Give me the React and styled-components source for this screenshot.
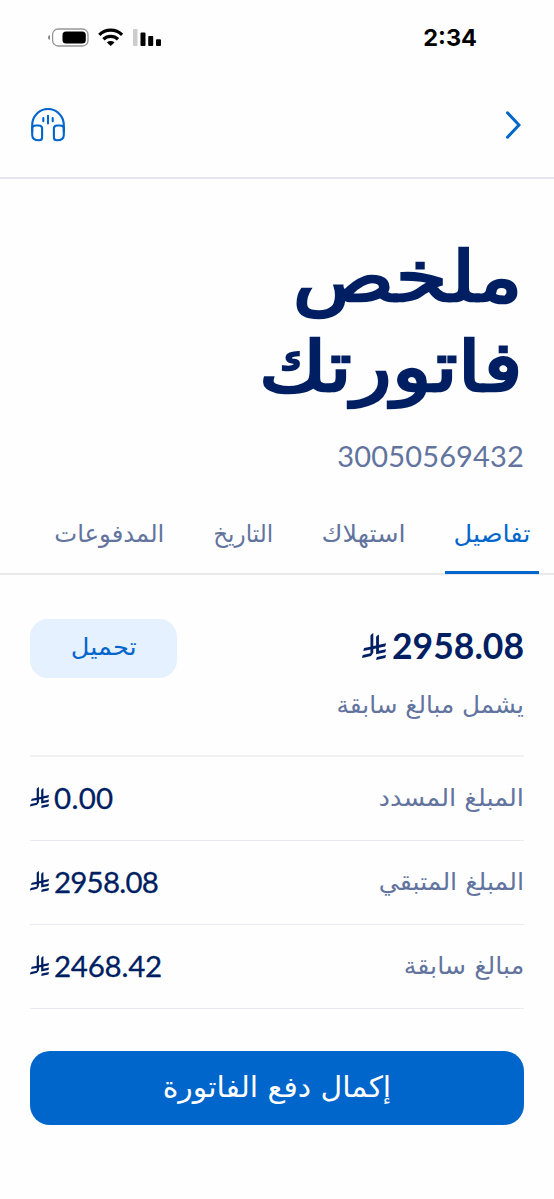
import React from "react";
import styled, { createGlobalStyle } from "styled-components";

const navy = "#001f62";
const blue = "#0066cc";
const slate = "#62749e";

const GlobalStyle = createGlobalStyle`
  * { box-sizing: border-box; }
  body { margin: 0; background: #fefefe; }
  button { border: 0; padding: 0; font: inherit; background: none; }
`;

const Screen = styled.main`
  width: 554px;
  height: 1199px;
  overflow: hidden;
  display: flex;
  flex-direction: column;
  background: #fefefe;
  color: ${navy};
  font-family: Lato, "DejaVu Sans", sans-serif;
`;

const StatusBar = styled.header`
  height: 75px;
  display: flex;
  justify-content: space-between;
  align-items: center;
  padding: 0 77px 0 48px;
`;

const Time = styled.span`
  font: 700 23.5px/28px Inter, sans-serif;
  color: #000;
`;

const NavBar = styled.nav`
  height: 104px;
  display: flex;
  justify-content: space-between;
  align-items: center;
  padding: 0 33px 2px 30px;
  border-bottom: 2px solid #e6e6f0;
`;

const IconButton = styled.button`
  display: flex;
`;

/* Keeps Arabic words joined while adjusting their horizontal proportion. */
const Arabic = styled.span`
  display: block;
  width: max-content;
  white-space: nowrap;
  font-family: "DejaVu Sans", sans-serif;
  font-size: ${(p) => p.$size || 24}px;
  line-height: 30px;
  transform: scaleX(${(p) => p.$stretch || 1});
  transform-origin: ${(p) => p.$origin || "right"};
`;

const TitleLine = styled(Arabic)`
  line-height: 90px;
  -webkit-text-stroke: 2.6px ${navy};
`;

const Hero = styled.section`
  height: 325px;
  padding: 53px 31px 0 30px;
`;

const Title = styled.h1`
  margin: 0;
  font-weight: 400;
`;

const Account = styled.p`
  margin: 24px -1px 0 0;
  font-size: 29px;
  line-height: 40px;
  letter-spacing: 0.15px;
  color: ${slate};
`;

const Tabs = styled.div`
  height: 71px;
  display: flex;
  padding-right: 15px;
  border-bottom: 2px solid #e9e9ec;
`;

const Tab = styled.button`
  width: ${(p) => p.$width}px;
  height: 70px;
  display: flex;
  justify-content: center;
  align-items: flex-start;
  padding-top: 15px;
  color: ${(p) => (p.$active ? blue : slate)};
  border-bottom: ${(p) => (p.$active ? `3px solid ${blue}` : "0")};
`;

const Summary = styled.section`
  height: 182px;
  margin: 0 30px;
  padding-top: 44px;
  display: flex;
  justify-content: space-between;
  align-items: flex-start;
  border-bottom: 2px solid #f0f1f3;
`;

const Total = styled.div`
  display: flex;
  flex-direction: column;
  align-items: flex-start;
  gap: 24px;
  padding-top: 7px;
  color: ${slate};
`;

const Amount = styled.span`
  direction: ltr;
  display: flex;
  align-items: center;
  gap: ${(p) => (p.$large ? 6 : 5)}px;
  color: ${navy};
  font-size: ${(p) => (p.$large ? 35.5 : 29.5)}px;
  line-height: 40px;
  font-weight: ${(p) => (p.$large ? 700 : 400)};
  letter-spacing: ${(p) => p.$spacing || 0}px;
  -webkit-text-stroke: ${(p) => (p.$large ? 0 : 0.3)}px ${navy};
`;

const Download = styled.button`
  width: 147px;
  height: 59px;
  padding-bottom: 3px;
  border-radius: 18px;
  display: flex;
  justify-content: center;
  align-items: center;
  background: #e5f1ff;
  color: ${blue};
`;

const Lines = styled.section`
  margin: 0 30px;
`;

const Line = styled.div`
  height: 84px;
  padding-bottom: 2px;
  display: flex;
  justify-content: space-between;
  align-items: center;
  border-bottom: 1px solid #e8eaef;
  color: ${slate};
`;

const Pay = styled.button`
  height: 74px;
  margin: 42px 30px 0;
  padding-bottom: 3px;
  border-radius: 20px;
  display: flex;
  justify-content: center;
  align-items: center;
  background: ${blue};
  color: #fff;
`;

function StatusIcons() {
  return (
    <svg width="114" height="20" viewBox="0 0 114 20">
      <path d="M2 7v5C.6 11.5 0 10.7 0 9.5s.6-2 2-2.5Z" fill="#888" />
      <rect x="4.6" y="1" width="35.4" height="17" rx="5.5" fill="none" stroke="#969696" strokeWidth="1.3" />
      <rect x="14.5" y="3.4" width="23.3" height="12.2" rx="3.6" />
      <g fill="none" stroke="#000" strokeWidth="3.3">
        <path d="M51.3 6.9a16.2 16.2 0 0 1 22.8 0" />
        <path d="M55.4 11.3a10.5 10.5 0 0 1 14.6 0" />
      </g>
      <path d="M62.7 18 58.9 14.4a5.6 5.6 0 0 1 7.6 0Z" />
      <rect x="85" y="1" width="4.5" height="17" rx="1" fill="#ccc" />
      <rect x="92.5" y="4.4" width="5" height="13.6" rx="1" />
      <rect x="100.2" y="8.1" width="5" height="9.9" rx="1" />
      <rect x="108" y="11.2" width="5" height="6.8" rx="1" />
    </svg>
  );
}

function Headset() {
  return (
    <svg width="36" height="36" viewBox="0 0 36 36" fill="none" stroke={blue} strokeWidth="2.1" strokeLinecap="round">
      <path d="M2.2 24.5V18a15.8 16 0 0 1 31.6 0v6.5" />
      <path d="M2.2 21c0-1.5 1.4-2.4 3.8-2.5h2.8c2.2 0 3.3 1 3.3 3v9c0 2-1 2.8-3 2.8-4.6 0-6.9-1.3-6.9-5.3Z" />
      <path d="M33.8 21c0-1.5-1.4-2.4-3.8-2.5h-2.8c-2.2 0-3.3 1-3.3 3v9c0 2 1 2.8 3 2.8 4.6 0 6.9-1.3 6.9-5.3Z" />
      <path d="M13.3 11v3.2M18 8.7v7.8M22.7 11v3.2" />
    </svg>
  );
}

function Chevron() {
  return (
    <svg width="16" height="28" viewBox="0 0 16 28" fill="none" stroke={blue} strokeWidth="3" strokeLinecap="round">
      <path d="M2.5 1.8 14 14 2.5 26.2" />
    </svg>
  );
}

function Riyal({ width, height }) {
  return (
    <svg width={width} height={height} viewBox="0 0 1124.14 1256.39" preserveAspectRatio="none" fill={navy}>
      <path d="M699.62 1113.02c-20.06 44.48-33.32 92.75-38.4 143.37l424.51-90.24c20.06-44.47 33.31-92.75 38.4-143.37l-424.51 90.24Z" />
      <path d="M1085.73 895.8c20.06-44.47 33.32-92.75 38.4-143.37l-330.68 70.33v-135.2l292.27-62.11c20.06-44.47 33.32-92.75 38.4-143.37l-330.68 70.27V66.13c-50.67 28.45-95.67 66.32-132.25 110.99v403.35l-132.25 28.11V0c-50.67 28.44-95.67 66.32-132.25 110.99v525.69l-295.91 62.88c-20.06 44.47-33.33 92.75-38.42 143.37l334.33-71.05v170.26l-358.3 76.14c-20.06 44.47-33.32 92.75-38.4 143.37l375.04-79.7c30.53-6.35 56.77-24.4 73.83-49.24l68.78-101.97v-.02c7.14-10.55 11.3-23.27 11.3-36.97v-149.98l132.25-28.11v270.4l424.53-90.28Z" />
    </svg>
  );
}

const tabs = [
  { label: "تفاصيل", width: 94, stretch: 1.07, active: true },
  { label: "استهلاك", width: 162, stretch: 1.06 },
  { label: "التاريخ", width: 80, stretch: 0.96 },
  { label: "المدفوعات", width: 187, stretch: 1.014 },
];

const lines = [
  { label: "المبلغ المسدد", stretch: 1.07, value: "0.00", spacing: 0.3 },
  { label: "المبلغ المتبقي", stretch: 1.053, value: "2958.08", spacing: -0.8 },
  { label: "مبالغ سابقة", stretch: 1.055, value: "2468.42", spacing: -0.25 },
];

export default function App() {
  return (
    <Screen dir="rtl">
      <GlobalStyle />
      <StatusBar dir="ltr">
        <StatusIcons />
        <Time>2:34</Time>
      </StatusBar>
      <NavBar dir="ltr">
        <IconButton aria-label="الدعم"><Headset /></IconButton>
        <IconButton aria-label="رجوع"><Chevron /></IconButton>
      </NavBar>
      <Hero>
        <Title>
          <TitleLine $size={70} $stretch={1.2}>ملخص</TitleLine>
          <TitleLine $size={70} $stretch={1.185}>فاتورتك</TitleLine>
        </Title>
        <Account>30050569432</Account>
      </Hero>
      <Tabs>
        {tabs.map((t) => (
          <Tab key={t.label} $width={t.width} $active={t.active}>
            <Arabic $stretch={t.stretch} $origin="center">{t.label}</Arabic>
          </Tab>
        ))}
      </Tabs>
      <Summary>
        <Total>
          <Amount $large><Riyal width={24} height={27} />2958.08</Amount>
          <Arabic $stretch={1.03}>يشمل مبالغ سابقة</Arabic>
        </Total>
        <Download><Arabic $stretch={1.07} $origin="center">تحميل</Arabic></Download>
      </Summary>
      <Lines>
        {lines.map((l) => (
          <Line key={l.label}>
            <Arabic $stretch={l.stretch}>{l.label}</Arabic>
            <Amount $spacing={l.spacing}><Riyal width={19} height={21} />{l.value}</Amount>
          </Line>
        ))}
      </Lines>
      <Pay><Arabic $size={29} $stretch={1.03} $origin="center">إكمال دفع الفاتورة</Arabic></Pay>
    </Screen>
  );
}
